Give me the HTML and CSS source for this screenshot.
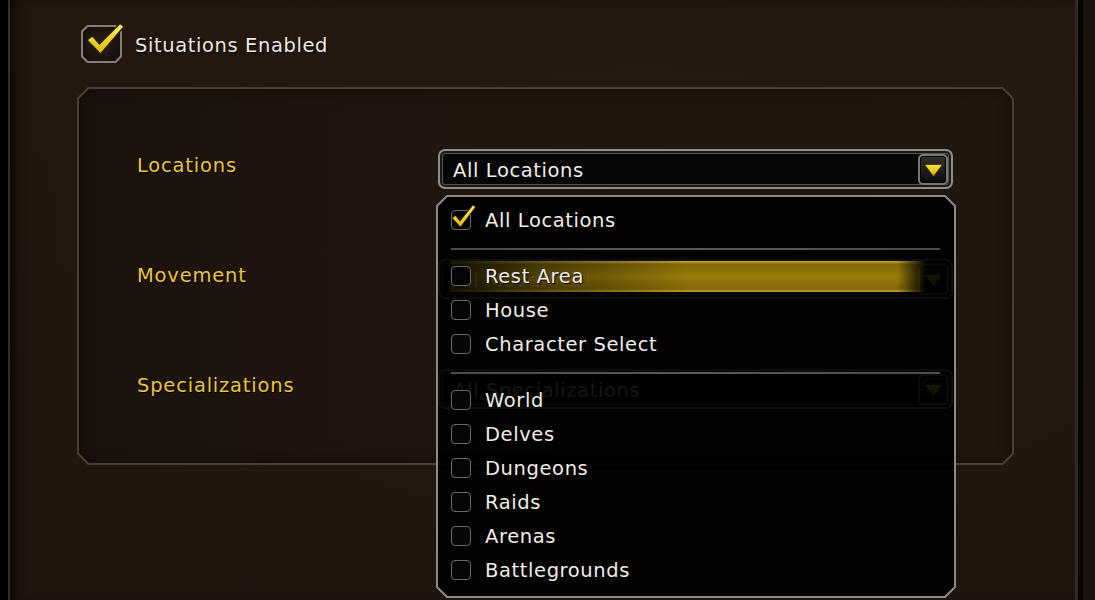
FILE: index.html
```html
<!DOCTYPE html>
<html lang="en">
<head>
<meta charset="utf-8">
<title>Situations</title>
<link rel="stylesheet" href="styles.css">
</head>
<body>
<div class="frame">
  <div class="edge-left"></div>
  <main class="main">
    <div class="toggle">
      <span class="bigbox">
        <span class="bigbox-frame"><span class="bigbox-inner"></span></span>
        <svg class="bigcheck" viewBox="0 -4 46 42" width="46" height="42">
          <defs>
            <linearGradient id="cg" x1="0" y1="0" x2="0" y2="1">
              <stop offset="0" stop-color="#fff06a"/>
              <stop offset="1" stop-color="#e2b800"/>
            </linearGradient>
          </defs>
          <polygon points="6,15 11.5,11 18.5,19 39,-1.5 43,1.5 19.5,29" fill="url(#cg)" stroke="#2a1e00" stroke-width="1.2" stroke-linejoin="round"/>
        </svg>
      </span>
      <span class="toggle-text">Situations Enabled</span>
    </div>

    <div class="panel">
      <div class="field-label">Locations</div>
      <div class="dropdown is-open">
        <span class="dropdown-text">All Locations</span>
        <span class="dropdown-btn">
          <svg viewBox="0 0 19 13" width="19" height="13"><defs><linearGradient id="ag" x1="0" y1="0" x2="0" y2="1"><stop offset="0" stop-color="#ffe83c"/><stop offset="1" stop-color="#d8a800"/></linearGradient></defs><polygon points="0.5,0.5 18.5,0.5 9.5,12.5" fill="url(#ag)" stroke="#3a2a00" stroke-width="0.8"/></svg>
        </span>

        <div class="menu">
          <svg class="menu-frame" width="520" height="403" viewBox="0 0 520 403">
            <polygon points="11,1 509,1 519,11 519,392 509,402 11,402 1,392 1,11" fill="rgba(0,0,0,0.91)" stroke="#8d8a85" stroke-width="2"/>
          </svg>
          <div class="menu-body">
            <div class="opt">
              <span class="cb">
                <svg class="cb-check" viewBox="-2 -8 28 28" width="28" height="28"><polygon points="1,8 4.5,5.5 9,11 22,-5 24.5,-3 9.5,17" fill="url(#cg)" stroke="#2a1e00" stroke-width="0.8" stroke-linejoin="round"/></svg>
              </span>
              <span class="opt-text">All Locations</span>
            </div>
            <div class="sep"></div>
            <div class="opt is-hover"><span class="cb"></span><span class="opt-text">Rest Area</span></div>
            <div class="opt"><span class="cb"></span><span class="opt-text">House</span></div>
            <div class="opt"><span class="cb"></span><span class="opt-text">Character Select</span></div>
            <div class="sep"></div>
            <div class="opt"><span class="cb"></span><span class="opt-text">World</span></div>
            <div class="opt"><span class="cb"></span><span class="opt-text">Delves</span></div>
            <div class="opt"><span class="cb"></span><span class="opt-text">Dungeons</span></div>
            <div class="opt"><span class="cb"></span><span class="opt-text">Raids</span></div>
            <div class="opt"><span class="cb"></span><span class="opt-text">Arenas</span></div>
            <div class="opt"><span class="cb"></span><span class="opt-text">Battlegrounds</span></div>
          </div>
        </div>
      </div>

      <div class="field-label">Movement</div>
      <div class="dropdown">
        <span class="dropdown-text">All Movement</span>
        <span class="dropdown-btn">
          <svg viewBox="0 0 19 13" width="19" height="13"><polygon points="0.5,0.5 18.5,0.5 9.5,12.5" fill="url(#ag)" stroke="#3a2a00" stroke-width="0.8"/></svg>
        </span>
      </div>

      <div class="field-label">Specializations</div>
      <div class="dropdown">
        <span class="dropdown-text">All Specializations</span>
        <span class="dropdown-btn">
          <svg viewBox="0 0 19 13" width="19" height="13"><polygon points="0.5,0.5 18.5,0.5 9.5,12.5" fill="url(#ag)" stroke="#3a2a00" stroke-width="0.8"/></svg>
        </span>
      </div>
    </div>
  </main>
  <div class="edge-right"></div>
</div>
</body>
</html>
```

FILE: styles.css
```css
* { box-sizing: border-box; }

html, body {
  margin: 0;
  padding: 0;
  width: 1095px;
  height: 600px;
  overflow: hidden;
  background: #1c130d;
  font-family: "DejaVu Sans", "Liberation Sans", sans-serif;
}

.frame {
  display: flex;
  width: 1095px;
  height: 600px;
}

.edge-left {
  width: 10px;
  flex: none;
  background: #020101;
  border-right: 2px solid #3a2e26;
}

.edge-right {
  width: 20px;
  flex: none;
  background: linear-gradient(to right, #33281f 0 3px, #060403 3px 8px, #1b130e 8px);
}

.main {
  flex: 1;
  padding: 25px 0 0 0;
  background:
    radial-gradient(ellipse at 60% 40%, rgba(50, 32, 20, 0.35), transparent 70%),
    linear-gradient(to bottom, #23170f, #21160f);
  box-shadow: inset 10px 0 12px -6px rgba(0, 0, 0, 0.7);
}

/* top toggle */
.toggle {
  display: flex;
  align-items: center;
  gap: 13px;
  margin-left: 71px;
  height: 38px;
}

.bigbox {
  position: relative;
  width: 41px;
  height: 38px;
  flex: none;
}

.bigbox-frame {
  display: block;
  width: 100%;
  height: 100%;
  padding: 2px;
  background: #857e77;
  clip-path: polygon(6px 0, calc(100% - 6px) 0, 100% 6px, 100% calc(100% - 6px), calc(100% - 6px) 100%, 6px 100%, 0 calc(100% - 6px), 0 6px);
}

.bigbox-inner {
  display: block;
  width: 100%;
  height: 100%;
  background: radial-gradient(circle at 50% 50%, #2a201a, #120c09);
  clip-path: polygon(5px 0, calc(100% - 5px) 0, 100% 5px, 100% calc(100% - 5px), calc(100% - 5px) 100%, 5px 100%, 0 calc(100% - 5px), 0 5px);
}

.bigcheck {
  position: absolute;
  left: 0;
  top: -4px;
  overflow: visible;
}

.toggle-text {
  color: #efe9e0;
  font-size: 19.5px;
  letter-spacing: 0.6px;
  text-shadow: 1px 1px 1px #000;
  margin-top: 2px;
}

/* panel: chamfered frame drawn by pseudo-elements so the open menu is not clipped */
.panel {
  position: relative;
  margin: 24px 0 0 67px;
  width: 937px;
  display: grid;
  grid-template-columns: 301px 515px;
  grid-auto-rows: 40px;
  row-gap: 70px;
  padding: 62px 0 56px 60px;
}

.panel::before,
.panel::after {
  content: "";
  position: absolute;
  z-index: 0;
}

.panel::before {
  inset: 0;
  background: #4a3e35;
  clip-path: polygon(11px 0, calc(100% - 11px) 0, 100% 11px, 100% calc(100% - 11px), calc(100% - 11px) 100%, 11px 100%, 0 calc(100% - 11px), 0 11px);
}

.panel::after {
  inset: 2px;
  background: linear-gradient(to right, #1b120d, #21160f 35%, #22170f);
  box-shadow: inset 0 0 14px rgba(0, 0, 0, 0.55);
  clip-path: polygon(10px 0, calc(100% - 10px) 0, 100% 10px, 100% calc(100% - 10px), calc(100% - 10px) 100%, 10px 100%, 0 calc(100% - 10px), 0 10px);
}

.panel > * {
  position: relative;
  z-index: 1;
}

.field-label {
  align-self: start;
  padding-top: 5px;
  line-height: 23px;
  color: #e9c637;
  font-size: 19.5px;
  letter-spacing: 0.8px;
  text-shadow: 1px 1px 1px #000;
}

/* dropdown */
.dropdown {
  display: flex;
  align-items: center;
  justify-content: space-between;
  width: 515px;
  height: 40px;
  padding: 0 3px 0 13px;
  border: 2px solid #8f8d89;
  border-radius: 7px;
  background: #070707;
  box-shadow: inset 0 0 0 2px #1b1a19, inset 0 0 0 3px #55534f;
}

.panel > .dropdown.is-open {
  z-index: 3;
}

.dropdown-text {
  color: #f0ede6;
  font-size: 19.5px;
  letter-spacing: 0.6px;
  text-shadow: 1px 1px 1px #000;
  margin-top: 2px;
}

.dropdown-btn {
  display: flex;
  align-items: center;
  justify-content: center;
  width: 30px;
  height: 31px;
  border: 2px solid #7b7873;
  border-radius: 5px;
  background: linear-gradient(to bottom, #33302c, #0e0d0c);
  box-shadow: inset 0 0 0 1px #000;
}

.dropdown-btn svg {
  display: block;
  margin-top: 2px;
}

/* open menu */
.menu {
  position: absolute;
  left: -4px;
  top: 44px;
  width: 520px;
  height: 403px;
}

.menu-frame {
  position: absolute;
  left: 0;
  top: 0;
}

.menu-body {
  position: relative;
  padding: 8px 2px 8px 2px;
}

.opt {
  position: relative;
  display: flex;
  align-items: center;
  gap: 14px;
  height: 34px;
  padding-left: 13px;
}

.opt.is-hover::before {
  content: "";
  position: absolute;
  left: 12px;
  right: 28px;
  top: 2px;
  bottom: 1px;
  background:
    linear-gradient(to bottom, rgba(240, 205, 70, 0.55) 0, rgba(240, 205, 70, 0.55) 1px, rgba(0,0,0,0) 3px, rgba(0,0,0,0) calc(100% - 3px), rgba(240, 205, 70, 0.5) calc(100% - 1px)),
    linear-gradient(to bottom, #7d6508, #9a7c0a 50%, #7a6207);
  -webkit-mask-image: linear-gradient(to right, rgba(0,0,0,0.12), rgba(0,0,0,0.55) 20%, #000 50%, #000 94%, rgba(0,0,0,0));
  mask-image: linear-gradient(to right, rgba(0,0,0,0.12), rgba(0,0,0,0.55) 20%, #000 50%, #000 94%, rgba(0,0,0,0));
}

.cb {
  position: relative;
  flex: none;
  width: 20px;
  height: 20px;
  border: 1.5px solid #6c6964;
  border-radius: 4px;
  background: #060606;
}

.cb-check {
  position: absolute;
  left: -3.5px;
  top: -9.5px;
  overflow: visible;
}

.opt-text {
  position: relative;
  color: #f0ede6;
  font-size: 19.5px;
  letter-spacing: 0.6px;
  text-shadow: 1px 1px 1px #000;
}

.sep {
  height: 2px;
  margin: 11px 14px 9px 13px;
  background: linear-gradient(to right, #4d4d4d, #5a5a5a 50%, #4d4d4d);
}
```
